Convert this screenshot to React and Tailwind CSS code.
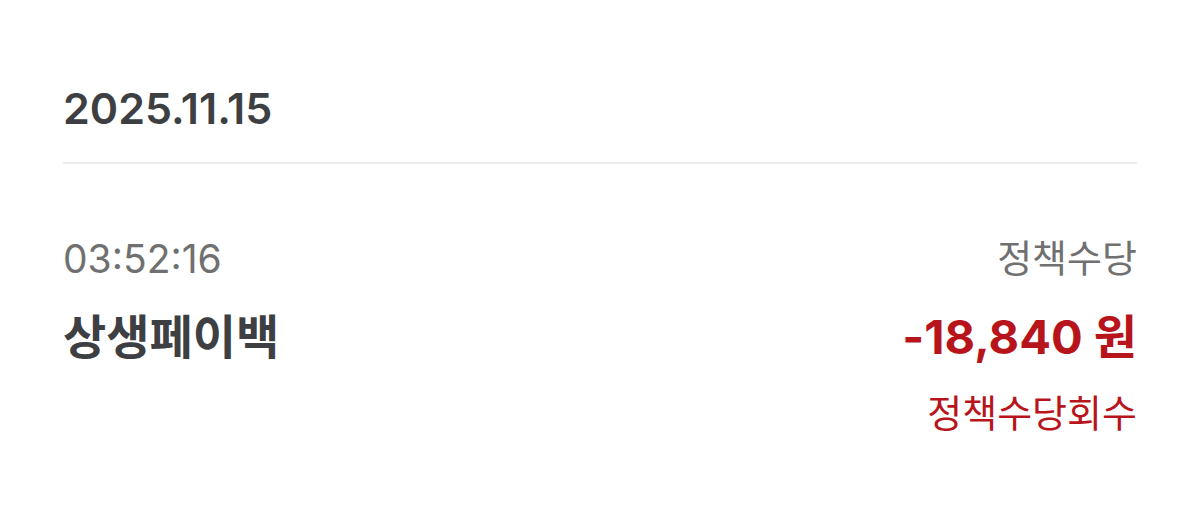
export default function App() {
  return (
    <div
      className="w-[1200px] h-[513px] bg-white px-[63px] pt-[80px]"
      style={{ fontFamily: '"Inter", "Noto Sans CJK KR", sans-serif' }}
    >
      {/* Date header */}
      <div className="h-[56px] flex items-center text-[43px] font-semibold leading-none text-[#3d3f42]">
        2025.11.15
      </div>
      <div className="mt-[26px] h-[2px] bg-[#ececec]" />

      {/* Transaction */}
      <div className="mt-[74px] flex justify-between">
        <div className="flex flex-col">
          <div className="h-[40px] flex items-center text-[39px] leading-none text-[#707070]">
            03:52:16
          </div>
          <div className="mt-[38px] h-[40px] flex items-center text-[47px] font-bold leading-none text-[#3d3f42]">
            상생페이백
          </div>
        </div>
        <div className="flex flex-col items-end">
          <div className="h-[40px] flex items-center text-[38px] leading-none text-[#707070]">
            정책수당
          </div>
          <div className="mt-[38px] h-[40px] flex items-center text-[47px] font-bold leading-none text-[#b8141c]">
            -18,840 원
          </div>
          <div className="mt-[37px] h-[40px] flex items-center text-[38px] leading-none text-[#b8141c]">
            정책수당회수
          </div>
        </div>
      </div>
    </div>
  );
}
